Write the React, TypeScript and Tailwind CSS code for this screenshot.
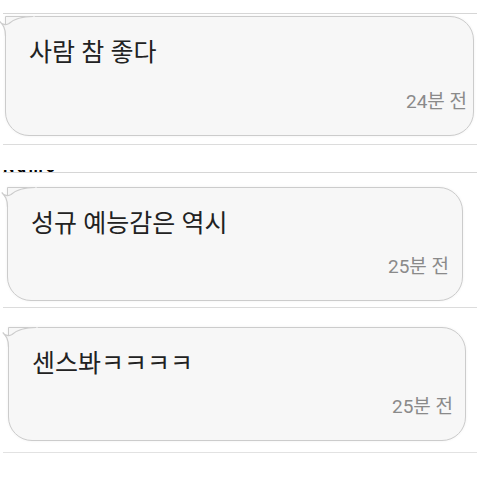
import React from "react";

function Tail() {
  return (
    <svg
      className="absolute left-[-7px] top-[-1px]"
      width="36"
      height="20"
      viewBox="0 0 36 20"
    >
      <path
        d="M36 0.5 L33 0.5 C22 0.5 15 3 10 7.5 C7 9.5 3 8.5 0.8 5.5 C4 9 6.5 12 6.5 20 L36 20 Z"
        fill="#f7f7f7"
      />
      <path
        d="M34 0.5 C22 0.5 15 3 10 7.5 C7 9.5 3 8.5 0.8 5.5 C4 9 6.5 12 6.5 20"
        fill="none"
        stroke="#cccccc"
        strokeWidth="1.2"
      />
    </svg>
  );
}

function Bubble({
  text,
  time,
  className,
  timeClass,
}: {
  text: string;
  time: string;
  className: string;
  timeClass: string;
}) {
  return (
    <div
      className={
        "relative flex flex-col rounded-[24px] rounded-tl-none border border-[#cccccc] bg-[#f7f7f7] shadow-[0_0_3px_rgba(0,0,0,0.06)] " +
        className
      }
    >
      <Tail />
      <div className="pl-[23px] pt-[21px] text-[25px] leading-[30px] text-[#222222]">
        {text}
      </div>
      <div
        className={
          "mt-auto self-end pb-[22px] text-[19px] leading-[22px] text-[#8a8a8a] " +
          timeClass
        }
      >
        {time}
      </div>
    </div>
  );
}

export default function App() {
  return (
    <div
      className="flex h-[480px] w-[480px] flex-col overflow-hidden bg-white"
      style={{ fontFamily: "Roboto, 'Noto Sans CJK KR', sans-serif" }}
    >
      <div className="mx-[3px] mt-[13px] h-px bg-[#d6d6d6]" />
      <Bubble
        text="사람 참 좋다"
        time="24분 전"
        className="ml-[5px] mt-[2px] h-[120px] w-[469px]"
        timeClass="pr-[6px]"
      />
      <div className="mx-[3px] mt-[8px] h-px bg-[#dcdcdc]" />
      <div className="mx-[3px] mt-[25px] flex h-[2px] items-end overflow-hidden">
        <span className="text-[16px] font-bold leading-[11px] tracking-[3px] text-black">
          Name
        </span>
      </div>
      <div className="mx-[3px] h-px bg-[#d6d6d6]" />
      <Bubble
        text="성규 예능감은 역시"
        time="25분 전"
        className="ml-[7px] mt-[14px] h-[114px] w-[456px]"
        timeClass="pr-[13px]"
      />
      <div className="mx-[3px] mt-[6px] h-px bg-[#dcdcdc]" />
      <Bubble
        text="센스봐ㅋㅋㅋㅋ"
        time="25분 전"
        className="ml-[8px] mt-[19px] h-[114px] w-[458px]"
        timeClass="pr-[12px]"
      />
      <div className="mx-[3px] mt-[11px] h-px bg-[#e2e2e2]" />
    </div>
  );
}
